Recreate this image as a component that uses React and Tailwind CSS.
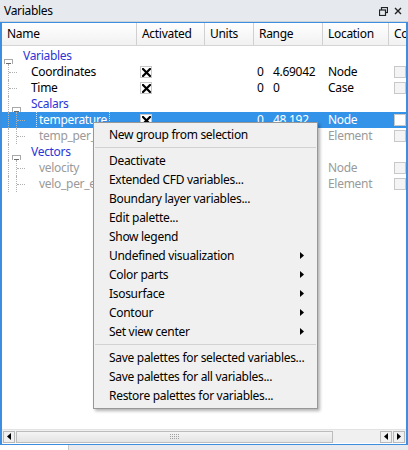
import React from "react";

const font = { fontFamily: '"Noto Sans", "Open Sans", sans-serif', letterSpacing: "-0.3px" };

function XBox() {
  return (
    <span className="inline-flex w-[12px] h-[12px] items-center justify-center bg-white border border-[#c8c8c8]">
      <svg width="9" height="9" viewBox="0 0 9 9">
        <path d="M1 1 L8 8 M8 1 L1 8" stroke="#000" strokeWidth="2.2" strokeLinecap="square" />
      </svg>
    </span>
  );
}

function GrayBox() {
  return <span className="inline-block w-[12px] h-[12px] bg-[#f4f4f4] border border-[#c8c8c8]" />;
}

function Expander() {
  return (
    <span className="inline-flex w-[9px] h-[9px] items-center justify-center border border-[#a8a8a8] bg-white">
      <span className="block w-[5px] h-px bg-[#6a6a6a]" />
    </span>
  );
}

const rows = [
  { name: "Variables", kind: "group", level: 0 },
  { name: "Coordinates", level: 1, act: true, r0: "0", r1: "4.69042", loc: "Node" },
  { name: "Time", level: 1, act: true, r0: "0", r1: "0", loc: "Case" },
  { name: "Scalars", kind: "group", level: 1 },
  { name: "temperature", level: 2, act: true, r0: "0", r1: "48.192", loc: "Node", sel: true },
  { name: "temp_per_element", level: 2, gray: true, loc: "Element" },
  { name: "Vectors", kind: "group", level: 1 },
  { name: "velocity", level: 2, gray: true, loc: "Node" },
  { name: "velo_per_element", level: 2, gray: true, loc: "Element" },
];

const cols = "grid-cols-[135px_68px_49px_69px_66px_40px]";

function Row({ r }) {
  const isGroup = r.kind === "group";
  const textColor = r.sel ? "text-white" : r.gray ? "text-[#9a9a9a]" : "text-black";
  const nameLeft = r.level === 0 ? 19 : r.level === 1 ? 27 : 35;
  return (
    <div className={`grid ${cols} h-[16px] items-center text-[12px] leading-[16px] ${r.sel ? "bg-[#3393e8]" : ""}`}>
      <div className="relative h-full overflow-hidden whitespace-nowrap">
        {r.level >= 1 && (
          <span className="absolute left-[6px] top-0 h-full border-l border-dotted border-[#b0b0b0]" />
        )}
        {r.level === 2 && (
          <span className="absolute left-[14px] top-0 h-full border-l border-dotted border-[#b0b0b0]" />
        )}
        {!isGroup && (
          <span
            className="absolute top-[8px] w-[8px] border-t border-dotted border-[#b0b0b0]"
            style={{ left: r.level === 1 ? 7 : 15 }}
          />
        )}
        {isGroup && (
          <span className="absolute top-[4px]" style={{ left: r.level === 0 ? 2 : 10 }}>
            <Expander />
          </span>
        )}
        <span
          className={`absolute top-0 ${isGroup ? "text-[#2b35d8]" : textColor} ${r.sel ? "outline outline-1 outline-dotted outline-[#cde4fa] pr-[2px]" : ""}`}
          style={{ left: nameLeft, paddingLeft: 2 }}
        >
          {r.name}
        </span>
      </div>
      <div className="pl-[3px] flex items-center">{r.act && <XBox />}</div>
      <div />
      <div className={`flex pl-[3px] ${textColor}`}>
        {r.r0 !== undefined && (
          <>
            <span className="w-[16px]">{r.r0}</span>
            <span>{r.r1}</span>
          </>
        )}
      </div>
      <div className={`pl-[5px] ${textColor}`}>{r.loc}</div>
      <div className="pl-[5px] flex items-center">{!isGroup && (r.sel ? <span className="inline-block w-[12px] h-[12px] bg-white border border-[#c8c8c8]" /> : <GrayBox />)}</div>
    </div>
  );
}

function Arrow() {
  return (
    <svg width="4" height="7" viewBox="0 0 4 7">
      <path d="M0 0 L4 3.5 L0 7 Z" fill="#000" />
    </svg>
  );
}

function MenuItem({ label, sub }) {
  return (
    <div className="h-[19px] flex items-center justify-between pl-[15px] pr-[13px] text-[12px] text-black whitespace-nowrap">
      <span>{label}</span>
      {sub && <Arrow />}
    </div>
  );
}

function Sep() {
  return (
    <div className="h-[7px] flex items-center px-[1px]">
      <div className="w-full h-px bg-[#d2d2d2]" />
    </div>
  );
}

function ScrollBtn({ dir }) {
  return (
    <div className="w-[12px] h-[12px] flex items-center justify-center bg-[#f0f0f0] border border-[#b8b8b8]">
      <svg width="4" height="7" viewBox="0 0 4 7">
        {dir === "left" ? <path d="M4 0 L0 3.5 L4 7 Z" fill="#000" /> : <path d="M0 0 L4 3.5 L0 7 Z" fill="#000" />}
      </svg>
    </div>
  );
}

export default function App() {
  return (
    <div className="w-[408px] h-[450px] bg-white relative overflow-hidden" style={font}>
      {/* title bar */}
      <div className="h-[22px] flex items-center justify-between bg-[#e6e9ee] border-b border-[#cfd3d9] pl-[4px] pr-[6px] pt-[1px] text-[12px] text-black">
        <span>Variables</span>
        <div className="flex items-center gap-[6px]">
          <svg width="9" height="9" viewBox="0 0 9 9">
            <rect x="2.5" y="0.5" width="6" height="5" fill="none" stroke="#222" strokeWidth="1.2" />
            <rect x="0.5" y="3" width="6" height="5.5" fill="#e6e9ee" stroke="#222" strokeWidth="1.2" />
          </svg>
          <svg width="8" height="8" viewBox="0 0 8 8">
            <path d="M1 1 L7 7 M7 1 L1 7" stroke="#222" strokeWidth="1.4" />
          </svg>
        </div>
      </div>

      {/* panel with blue focus frame */}
      <div className="h-[423px] flex flex-col border-l-2 border-r-2 border-t border-b border-[#3c8fe0] overflow-hidden">
        {/* header */}
        <div className={`grid ${cols} h-[23px] text-[12px] text-black bg-gradient-to-b from-white to-[#f1f1f1] border-b border-[#d5d5d5]`}>
          {["Name", "Activated", "Units", "Range", "Location", "Co"].map((h) => (
            <div key={h} className="flex items-center pl-[5px] border-r border-[#d0d0d0] whitespace-nowrap overflow-hidden">
              {h}
            </div>
          ))}
        </div>
        {/* rows */}
        <div className="flex-1 pt-[2px]">
          {rows.map((r) => (
            <Row key={r.name} r={r} />
          ))}
        </div>
        {/* horizontal scrollbar */}
        <div className="h-[14px] mb-[1px] flex items-center gap-[1px] px-[1px] bg-[#f0f0f0] border-t border-[#e2e2e2]">
          <ScrollBtn dir="left" />
          <div className="flex-1 h-[12px] flex items-center">
            <div className="w-[317px] h-[12px] bg-gradient-to-b from-[#f4f4f4] to-[#e4e4e4] border border-[#bcbcbc] flex items-center justify-center">
              <div className="grid grid-cols-5 gap-[1px]">
                {Array.from({ length: 15 }).map((_, i) => (
                  <span key={i} className="w-[1px] h-[1px] bg-[#a0a0a0]" />
                ))}
              </div>
            </div>
          </div>
          <ScrollBtn dir="left" />
          <ScrollBtn dir="right" />
        </div>
      </div>
      {/* bottom tab strip */}
      <div className="h-[5px] flex">
        <div className="w-[68px] bg-white" />
        <div className="flex-1 bg-[#e8eaee] border-l border-[#c8c8c8]" />
      </div>

      {/* context menu */}
      <div className="absolute left-[93px] top-[122px] w-[225px] bg-[#f0f0f0] border border-[#979797] pt-[2px] pb-[3px] shadow-[2px_2px_3px_rgba(0,0,0,0.3)]">
        <MenuItem label="New group from selection" />
        <Sep />
        <MenuItem label="Deactivate" />
        <MenuItem label="Extended CFD variables..." />
        <MenuItem label="Boundary layer variables..." />
        <MenuItem label="Edit palette..." />
        <MenuItem label="Show legend" />
        <MenuItem label="Undefined visualization" sub />
        <MenuItem label="Color parts" sub />
        <MenuItem label="Isosurface" sub />
        <MenuItem label="Contour" sub />
        <MenuItem label="Set view center" sub />
        <Sep />
        <MenuItem label="Save palettes for selected variables..." />
        <MenuItem label="Save palettes for all variables..." />
        <MenuItem label="Restore palettes for variables..." />
      </div>
    </div>
  );
}
